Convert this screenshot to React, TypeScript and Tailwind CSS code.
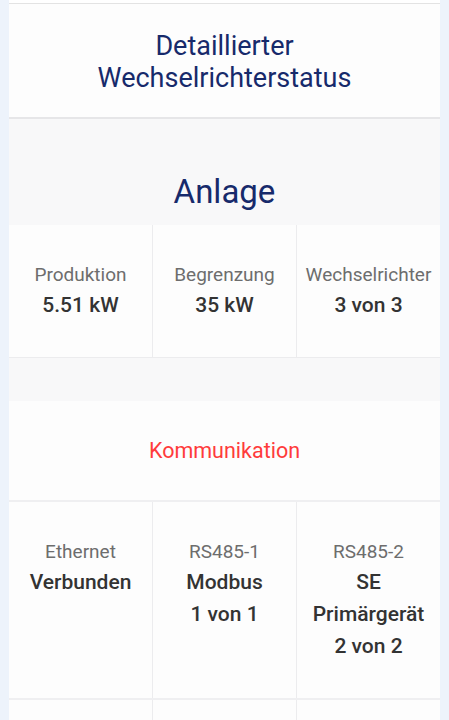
import React from "react";

const font = { fontFamily: "Roboto, 'Noto Sans', sans-serif" };

function Cell({ label, values, last }: { label: string; values: string[]; last?: boolean }) {
  return (
    <div
      className={`flex-1 flex flex-col items-center text-center pt-[37px] pb-[36px] ${last ? "" : "border-r border-[#ececee]"}`}
    >
      <div className="text-[19px] leading-[26px] text-[#6d6d6d] whitespace-nowrap">{label}</div>
      <div className="mt-[1px] flex flex-col items-center">
        {values.map((v, i) => (
          <div key={i} className="text-[21px] leading-[32px] font-medium text-[#333333] whitespace-nowrap">
            {v}
          </div>
        ))}
      </div>
    </div>
  );
}

export default function App() {
  return (
    <div className="min-h-[720px] bg-[#edf3fb] px-[9px]" style={font}>
      <div className="bg-white h-[3px]" />
      <div className="bg-[#fdfdfd] border-t border-[#e3e3e3] border-b-2 border-b-[#e6e6e8] h-[116px] flex flex-col items-center justify-center pt-[2px]">
        <div className="text-[27px] leading-[32px] text-[#172a6b] text-center">
          Detaillierter
          <br />
          Wechselrichterstatus
        </div>
      </div>
      <div className="bg-[#f8f8f9]">
        <div className="h-[106px] flex items-end justify-center pb-[12px]">
          <div className="text-[33px] leading-[42px] text-[#172a6b]">Anlage</div>
        </div>
        <div className="flex bg-[#fdfdfd] border-b border-[#ececee]">
          <Cell label="Produktion" values={["5.51 kW"]} />
          <Cell label="Begrenzung" values={["35 kW"]} />
          <Cell label="Wechselrichter" values={["3 von 3"]} last />
        </div>
        <div className="h-[43px]" />
      </div>
      <div className="bg-[#fdfdfd]">
        <div className="h-[101px] flex items-center justify-center border-b-2 border-[#efeff1] pt-[1px]">
          <div className="text-[21.5px] leading-[28px] text-[#ff3b3b]">Kommunikation</div>
        </div>
        <div className="flex border-b-2 border-[#efeff1]">
          <Cell label="Ethernet" values={["Verbunden"]} />
          <Cell label="RS485-1" values={["Modbus", "1 von 1"]} />
          <Cell label="RS485-2" values={["SE", "Primärgerät", "2 von 2"]} last />
        </div>
        <div className="flex h-[120px]">
          <div className="flex-1 border-r border-[#ececee]" />
          <div className="flex-1 border-r border-[#ececee]" />
          <div className="flex-1" />
        </div>
      </div>
    </div>
  );
}
